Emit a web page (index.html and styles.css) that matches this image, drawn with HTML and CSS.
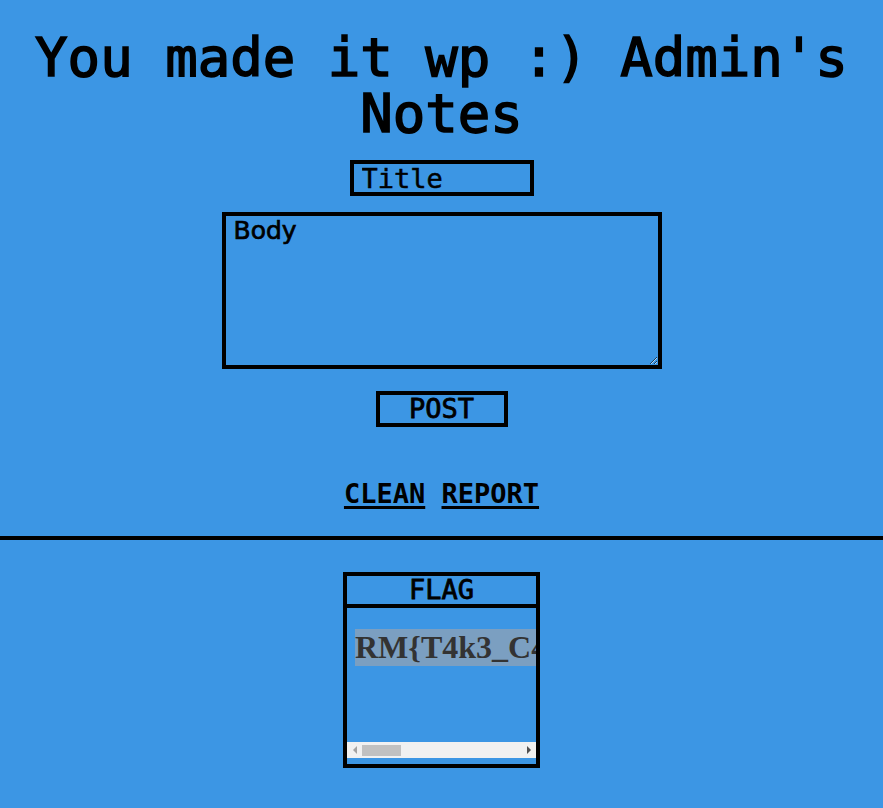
FILE: index.html
```html
<!DOCTYPE html>
<html lang="en">
<head>
<meta charset="utf-8">
<title>Admin's Notes</title>
<link rel="stylesheet" href="styles.css">
</head>
<body>
<main class="page">
  <h1 class="heading">You made it wp :) Admin's Notes</h1>
  <form class="note-form">
    <input class="field-title" type="text" placeholder="Title">
    <textarea class="field-body" placeholder="Body"></textarea>
    <button class="post-btn" type="button">POST</button>
  </form>
  <nav class="actions"><a class="action-link" href="#">CLEAN</a> <a class="action-link" href="#">REPORT</a></nav>
</main>
<div class="divider"></div>
<section class="notes">
  <article class="note">
    <div class="note-head">FLAG</div>
    <div class="note-body">
      <div class="note-view"><span class="flag">RM{T4k3_C4</span></div>
      <div class="hscroll">
        <span class="arrow arrow-left"></span>
        <div class="track"><span class="thumb"></span></div>
        <span class="arrow arrow-right"></span>
      </div>
    </div>
  </article>
</section>
</body>
</html>
```
FILE: styles.css
```css
html, body {
  margin: 0;
  padding: 0;
}
body {
  background: #3c96e4;
  color: #000;
  font-family: "DejaVu Sans Mono", "Liberation Mono", monospace;
  font-size: 27px;
  min-height: 808px;
}
.page {
  display: flex;
  flex-direction: column;
  align-items: center;
}
.heading {
  margin: 30px 0 18px;
  font-size: 54px;
  line-height: 56px;
  font-weight: normal;
  -webkit-text-stroke: 1.6px #000;
  text-align: center;
}
.note-form {
  display: flex;
  flex-direction: column;
  align-items: center;
}
.field-title,
.field-body,
.post-btn {
  box-sizing: border-box;
  border: 4px solid #000;
  background: transparent;
  color: #000;
  margin: 0;
  outline: none;
  border-radius: 0;
}
.field-title {
  width: 184px;
  height: 36px;
  padding: 0 8px;
  font-family: "DejaVu Sans Mono", monospace;
  font-size: 27px;
  -webkit-text-stroke: 0.5px #000;
}
.field-body {
  width: 440px;
  height: 157px;
  margin-top: 16px;
  padding: 0 8px;
  font-family: "DejaVu Sans", sans-serif;
  font-size: 25px;
  -webkit-text-stroke: 0.7px #000;
}
.field-title::placeholder,
.field-body::placeholder {
  color: #000;
  opacity: 1;
}
.post-btn {
  width: 132px;
  height: 36px;
  margin-top: 22px;
  padding: 0;
  font-family: "DejaVu Sans Mono", monospace;
  font-size: 27px;
  line-height: 28px;
  -webkit-text-stroke: 0.8px #000;
}
.actions {
  margin-top: 51px;
  line-height: 31px;
  white-space: pre;
}
.action-link {
  color: #000;
  font-weight: bold;
  text-decoration: underline;
  text-decoration-thickness: 3px;
  text-underline-offset: 3px;
}
.divider {
  margin-top: 27px;
  height: 4px;
  background: #000;
}
.notes {
  display: flex;
  justify-content: center;
  padding-top: 32px;
}
.note {
  box-sizing: border-box;
  width: 197px;
  border: 4px solid #000;
}
.note-head {
  height: 28px;
  line-height: 28px;
  text-align: center;
  border-bottom: 4px solid #000;
  -webkit-text-stroke: 0.8px #000;
}
.note-body {
  height: 156px;
  display: flex;
  flex-direction: column;
  padding-bottom: 6px;
  box-sizing: border-box;
}
.note-view {
  flex: 1;
  overflow: hidden;
  padding: 21px 0 0 8px;
  white-space: nowrap;
}
.flag {
  display: inline-block;
  padding-right: 40px;
  font-family: "Liberation Serif", "Times New Roman", serif;
  font-weight: bold;
  font-size: 32px;
  line-height: 37px;
  color: #333;
  background: #7b9fc1;
}
.hscroll {
  height: 16px;
  background: #f1f1f1;
  display: flex;
  align-items: center;
}
.track {
  flex: 1;
  height: 100%;
  display: flex;
  align-items: center;
}
.thumb {
  display: block;
  width: 39px;
  height: 11px;
  background: #c1c1c1;
}
.arrow {
  width: 15px;
  height: 16px;
  display: flex;
  align-items: center;
  justify-content: center;
}
.arrow::before {
  content: "";
  width: 0;
  height: 0;
  border-top: 4px solid transparent;
  border-bottom: 4px solid transparent;
}
.arrow-left::before {
  border-right: 4px solid #a3a3a3;
}
.arrow-right::before {
  border-left: 4px solid #505050;
}
```
